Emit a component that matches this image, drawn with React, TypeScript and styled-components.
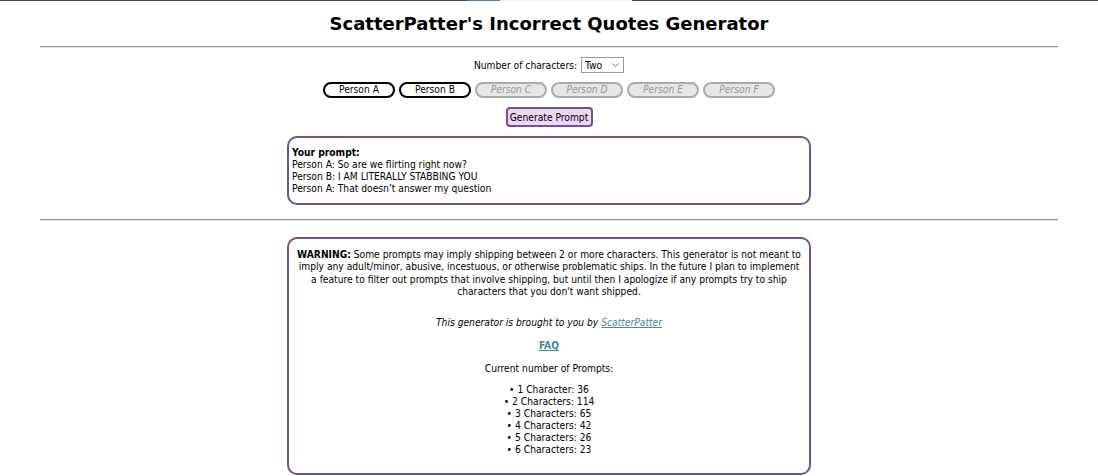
import styled, { createGlobalStyle } from "styled-components";

const GlobalStyle = createGlobalStyle`
  body {
    margin: 0;
    background: #fff;
    color: #000;
    font-family: "DejaVu Sans Condensed", "Liberation Sans", sans-serif;
    font-size: 10.2px;
  }
`;

const people = ["A", "B", "C", "D", "E", "F"];
const counts = [
  ["1 Character", 36],
  ["2 Characters", 114],
  ["3 Characters", 65],
  ["4 Characters", 42],
  ["5 Characters", 26],
  ["6 Characters", 23],
];

export default function App() {
  return (
    <Page>
      <GlobalStyle />
      <TopStrip>
        <Strip $w="467px" $c="#444" />
        <Strip $w="33px" $c="#4a7ab0" />
        <Strip $w="132px" $c="#eeeeee" />
        <Strip $w="auto" $c="#444" $grow />
      </TopStrip>

      <Title>ScatterPatter's Incorrect Quotes Generator</Title>
      <Rule />

      <CountRow>
        <span>Number of characters:</span>
        <SelectWrap>
          <Select defaultValue="2">
            <option value="1">One</option>
            <option value="2">Two</option>
            <option value="3">Three</option>
            <option value="4">Four</option>
            <option value="5">Five</option>
            <option value="6">Six</option>
          </Select>
          <Chevron width="7" height="4" viewBox="0 0 7 4">
            <path d="M0.5 0.5 L3.5 3.5 L6.5 0.5" fill="none" stroke="#777" strokeWidth="1" />
          </Chevron>
        </SelectWrap>
      </CountRow>

      <PeopleRow>
        {people.map((p, i) => (
          <PersonButton key={p} disabled={i > 1}>
            Person {p}
          </PersonButton>
        ))}
      </PeopleRow>

      <GenerateRow>
        <GenerateButton>Generate Prompt</GenerateButton>
      </GenerateRow>

      <PromptBox>
        <b>Your prompt:</b>
        <br />
        Person A: So are we flirting right now?
        <br />
        Person B: I AM LITERALLY STABBING YOU
        <br />
        Person A: That doesn’t answer my question
      </PromptBox>

      <Rule $top="14px" />

      <InfoBox>
        <Warning>
          <b>WARNING:</b> Some prompts may imply shipping between 2 or more characters. This generator is not
          meant to imply any adult/minor, abusive, incestuous, or otherwise problematic ships. In the future I
          plan to implement a feature to filter out prompts that involve shipping, but until then I apologize if
          any prompts try to ship characters that you don't want shipped.
        </Warning>
        <Credit>
          This generator is brought to you by <TealLink href="#">ScatterPatter</TealLink>
        </Credit>
        <Para>
          <TealLink href="#">
            <b>FAQ</b>
          </TealLink>
        </Para>
        <Para>Current number of Prompts:</Para>
        <CountList>
          {counts.map(([label, n]) => (
            <CountItem key={label}>
              {label}: {n}
            </CountItem>
          ))}
        </CountList>
      </InfoBox>
    </Page>
  );
}

const Page = styled.div`
  display: flex;
  flex-direction: column;
  align-items: center;
  padding-bottom: 3px;
`;

const TopStrip = styled.div`
  display: flex;
  width: 100%;
  height: 1px;
`;

const Strip = styled.div<{ $w: string; $c: string; $grow?: boolean }>`
  width: ${(p) => p.$w};
  flex: ${(p) => (p.$grow ? "1" : "none")};
  background: ${(p) => p.$c};
`;

const Title = styled.h1`
  margin: 13px 0 0;
  font-family: "DejaVu Sans", Verdana, sans-serif;
  font-size: 18px;
  line-height: 20px;
  font-weight: bold;
`;

const Rule = styled.hr<{ $top?: string }>`
  align-self: stretch;
  margin: ${(p) => p.$top || "12px"} 40px 0;
  height: 0;
  border: none;
  border-top: 1px solid #8f8f8f;
  border-bottom: 1px solid #e4e4e4;
`;

const CountRow = styled.div`
  margin-top: 9px;
  display: flex;
  align-items: center;
  gap: 4px;
  height: 16px;
`;

const SelectWrap = styled.div`
  position: relative;
  display: flex;
`;

const Select = styled.select`
  appearance: none;
  width: 43px;
  height: 16px;
  padding: 0 0 0 3px;
  border: 1px solid #9a9a9a;
  border-radius: 0;
  background: #fff;
  font-family: inherit;
  font-size: 10.2px;
  color: #000;
`;

const Chevron = styled.svg`
  position: absolute;
  right: 5px;
  top: 6px;
  pointer-events: none;
`;

const PeopleRow = styled.div`
  margin-top: 9px;
  display: flex;
  gap: 4px;
`;

const PersonButton = styled.button`
  width: 72px;
  height: 16px;
  padding: 0;
  border-radius: 9px;
  border: 2px solid ${(p) => (p.disabled ? "#aaaaaa" : "#000")};
  background: ${(p) => (p.disabled ? "#e6e6e6" : "#fff")};
  color: ${(p) => (p.disabled ? "#999" : "#000")};
  font-style: ${(p) => (p.disabled ? "italic" : "normal")};
  font-family: inherit;
  font-size: 10.2px;
  line-height: 12px;
`;

const GenerateRow = styled.div`
  margin-top: 9px;
  display: flex;
`;

const GenerateButton = styled.button`
  width: 87px;
  height: 20px;
  padding: 0;
  border: 2px solid #75508e;
  border-radius: 4px;
  background: #ecd6f6;
  color: #000;
  font-family: inherit;
  font-size: 10.2px;
  white-space: nowrap;
`;

const Box = styled.div`
  box-sizing: border-box;
  width: 524px;
  border: 2px solid #75508e;
  border-radius: 10px;
  line-height: 12px;
`;

const PromptBox = styled(Box)`
  margin-top: 9px;
  padding: 9px 3px 8px;
  text-align: left;
`;

const InfoBox = styled(Box)`
  margin-top: 16px;
  padding: 10px 6px 17px;
  text-align: center;
`;

const Warning = styled.p`
  margin: 0;
  line-height: 12.3px;
`;

const Credit = styled.p`
  margin: 19px 0 0;
  font-style: italic;
`;

const Para = styled.p`
  margin: 11px 0 0;
`;

const TealLink = styled.a`
  color: #3f8a99;
  text-decoration: underline;
`;

const CountList = styled.ul`
  margin: 9px 0 0;
  padding: 0;
  list-style: none;
`;

const CountItem = styled.li`
  &::before {
    content: "•";
    margin-right: 3px;
  }
`;
